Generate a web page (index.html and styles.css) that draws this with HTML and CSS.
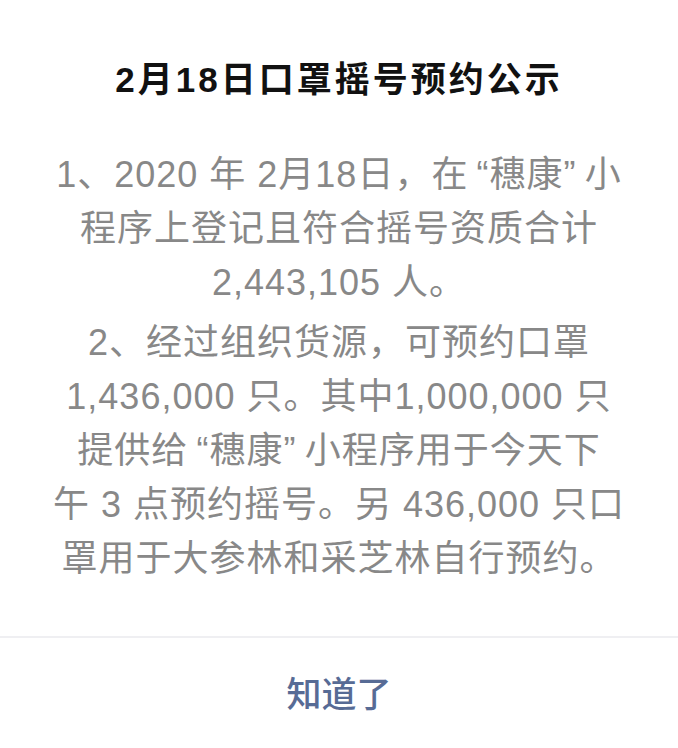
FILE: index.html
```html
<!DOCTYPE html>
<html lang="zh-CN">
<head>
<meta charset="utf-8">
<link rel="stylesheet" href="styles.css">
</head>
<body>
<div class="dialog">
  <h1 class="title">2月18日口罩摇号预约公示</h1>
  <div class="content">
    <p>1、2020 年 2月18日，在&thinsp;“穗康”&thinsp;小<br>程序上登记且符合摇号资质合计<br>2,443,105 人。</p>
    <p>2、经过组织货源，可预约口罩<br>1,436,000 只。其中1,000,000 只<br>提供给&thinsp;“穗康”&thinsp;小程序用于今天下<br>午 3 点预约摇号。另 436,000 只口<br>罩用于大参林和采芝林自行预约。</p>
  </div>
  <div class="footer">
    <button class="btn">知道了</button>
  </div>
</div>
</body>
</html>
```
FILE: styles.css
```css
html, body {
  margin: 0;
  padding: 0;
  background: #fff;
}
body {
  font-family: "Liberation Sans", "Noto Sans CJK SC", sans-serif;
}
.dialog {
  display: flex;
  flex-direction: column;
  width: 678px;
  height: 748px;
}
.title {
  margin: 56px 0 0;
  font-size: 35px;
  line-height: 48px;
  font-weight: 700;
  color: #111;
  text-align: center;
  letter-spacing: 3px;
}
.content {
  margin-top: 44px;
  text-align: center;
  color: #888;
  font-size: 36px;
  line-height: 54px;
  letter-spacing: 1px;
}
.content p {
  margin: 0;
}
.content p + p {
  margin-top: 6px;
}
.footer {
  margin-top: 50px;
  border-top: 2px solid #efeff2;
  flex: 1;
  display: flex;
  align-items: center;
  justify-content: center;
}
.btn {
  border: 0;
  background: none;
  padding: 0;
  font-family: inherit;
  font-size: 35px;
  font-weight: 500;
  color: #576b95;
  margin-top: -4px;
}
```
